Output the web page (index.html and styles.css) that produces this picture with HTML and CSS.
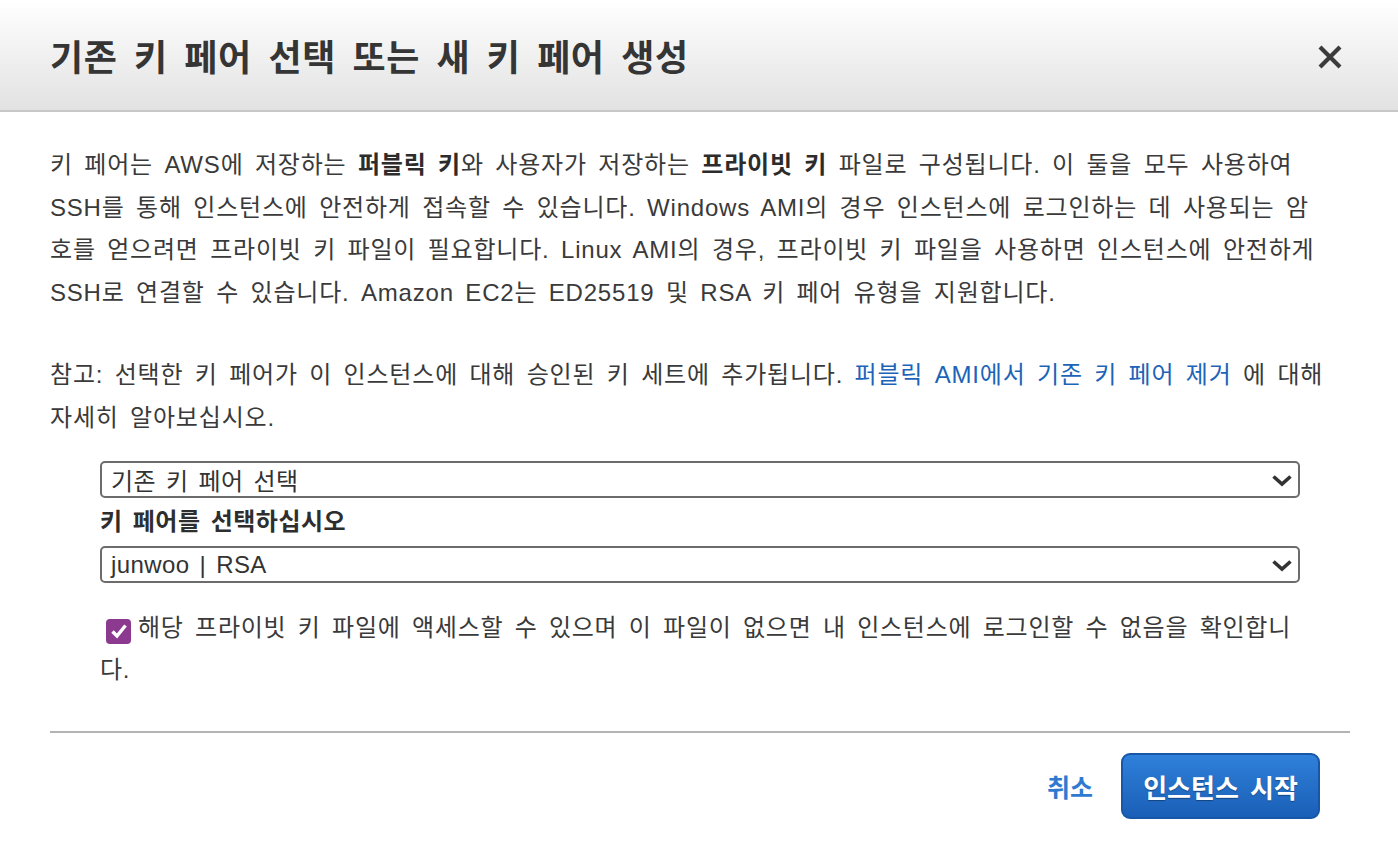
FILE: index.html
```html
<!DOCTYPE html>
<html lang="ko">
<head>
<meta charset="utf-8">
<link rel="stylesheet" href="styles.css">
</head>
<body>
<div class="modal">
  <div class="header">
    <h1 class="title">기존 키 페어 선택 또는 새 키 페어 생성</h1>
    <span class="close" aria-label="닫기">
      <svg width="26" height="26" viewBox="0 0 26 26"><path d="M3 3L23 23M23 3L3 23" stroke="#3b3b3b" stroke-width="4.2" stroke-linecap="butt"/></svg>
    </span>
  </div>
  <div class="body">
    <p class="para">키 페어는 AWS에 저장하는 <b>퍼블릭 키</b>와 사용자가 저장하는 <b>프라이빗 키</b> 파일로 구성됩니다. 이 둘을 모두 사용하여<br>SSH를 통해 인스턴스에 안전하게 접속할 수 있습니다. Windows AMI의 경우 인스턴스에 로그인하는 데 사용되는 암<br>호를 얻으려면 프라이빗 키 파일이 필요합니다. Linux AMI의 경우, 프라이빗 키 파일을 사용하면 인스턴스에 안전하게<br>SSH로 연결할 수 있습니다. Amazon EC2는 ED25519 및 RSA 키 페어 유형을 지원합니다.</p>
    <p class="para">참고: 선택한 키 페어가 이 인스턴스에 대해 승인된 키 세트에 추가됩니다. <a class="link" href="#">퍼블릭 AMI에서 기존 키 페어 제거</a> 에 대해<br>자세히 알아보십시오.</p>
    <div class="form">
      <div class="select">
        <span>기존 키 페어 선택</span>
        <svg class="chev" width="20" height="14" viewBox="0 0 20 14"><path d="M1.5 3.5L10 11L18.5 3.5" fill="none" stroke="#333" stroke-width="3.6"/></svg>
      </div>
      <div class="label">키 페어를 선택하십시오</div>
      <div class="select">
        <span>junwoo | RSA</span>
        <svg class="chev" width="20" height="14" viewBox="0 0 20 14"><path d="M1.5 3.5L10 11L18.5 3.5" fill="none" stroke="#333" stroke-width="3.6"/></svg>
      </div>
      <div class="check-row">
        <span class="checkbox"><svg width="18" height="16" viewBox="0 0 18 16"><path d="M2.5 8.5L7 13L15.5 2.5" fill="none" stroke="#fff" stroke-width="3.4"/></svg></span>해당 프라이빗 키 파일에 액세스할 수 있으며 이 파일이 없으면 내 인스턴스에 로그인할 수 없음을 확인합니<br>다.
      </div>
    </div>
    <div class="footer">
      <a class="cancel" href="#">취소</a>
      <button class="primary">인스턴스 시작</button>
    </div>
  </div>
</div>
</body>
</html>
```
FILE: styles.css
```css
html, body {
  margin: 0;
  padding: 0;
  background: #fff;
}
body {
  font-family: "Liberation Sans", "Noto Sans CJK KR", sans-serif;
  color: #3a3a3a;
  width: 1398px;
  height: 854px;
  overflow: hidden;
}
.modal {
  width: 1398px;
}
.header {
  height: 112px;
  box-sizing: border-box;
  background: linear-gradient(#ffffff, #e2e2e2);
  border-bottom: 2px solid #c8c8c8;
  display: flex;
  align-items: center;
  justify-content: space-between;
  padding: 0 55px 0 50px;
}
.title {
  margin: 0;
  font-size: 36px;
  font-weight: bold;
  color: #353535;
  word-spacing: 6px;
  letter-spacing: 0.6px;
}
.close {
  display: flex;
  margin-top: 4px;
}
.body {
  padding: 0 48px 0 50px;
}
.para {
  margin: 0;
  padding-top: 32px;
  font-size: 24px;
  line-height: 42.5px;
  color: #3a3a3a;
  word-spacing: 4px;
  letter-spacing: 0.8px;
  white-space: nowrap;
}
.para + .para {
  padding-top: 40px;
}
.para b {
  color: #2c2c2c;
}
.link {
  color: #1d64b8;
  text-decoration: none;
}
.form {
  padding: 22px 50px 0 50px;
}
.select {
  height: 37px;
  box-sizing: border-box;
  border: 2px solid #6c6c6c;
  border-radius: 5px;
  display: flex;
  align-items: center;
  justify-content: space-between;
  padding: 0 6px 0 9px;
  font-size: 24px;
  color: #333;
  word-spacing: 3px;
  letter-spacing: 0.4px;
}
.chev {
  display: block;
}
.label {
  font-size: 24px;
  font-weight: bold;
  color: #2e2e2e;
  line-height: 48px;
  word-spacing: 3px;
  letter-spacing: 0.5px;
}
.check-row {
  margin-top: 24px;
  font-size: 24px;
  line-height: 42px;
  color: #3a3a3a;
  word-spacing: 4px;
  letter-spacing: 0.75px;
  white-space: nowrap;
}
.checkbox {
  display: inline-flex;
  align-items: center;
  justify-content: center;
  width: 25px;
  height: 25px;
  border-radius: 4px;
  background: #8b3a8f;
  vertical-align: -3px;
  margin: 0 7px 0 6px;
}
.footer {
  margin-top: 40px;
  border-top: 2px solid #b3b3b3;
  display: flex;
  justify-content: flex-end;
  align-items: center;
  padding-top: 20px;
  padding-right: 30px;
}
.cancel {
  color: #2f7ad0;
  font-weight: bold;
  font-size: 25px;
  text-decoration: none;
  margin-right: 28px;
}
.primary {
  height: 66px;
  width: 199px;
  border: 2px solid #1856a8;
  border-radius: 9px;
  background: linear-gradient(#2f80da, #1a5fb7);
  color: #fff;
  font-family: "Liberation Sans", "Noto Sans CJK KR", sans-serif;
  font-weight: bold;
  font-size: 26px;
  word-spacing: 4px;
  text-shadow: 0 1px 1px rgba(0,0,0,0.35);
}
```
